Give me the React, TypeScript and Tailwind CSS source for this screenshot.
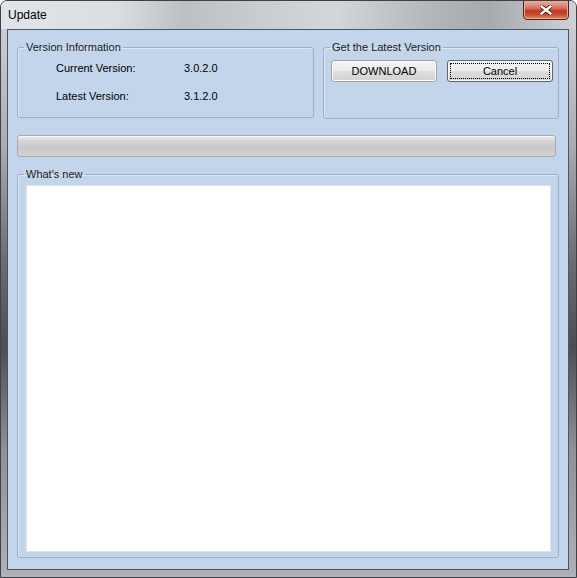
import React from 'react'

const FONT = 'font-["Liberation_Sans",Arial,sans-serif]'

function cn(...parts: (string | false | undefined)[]) {
  return parts.filter(Boolean).join(' ')
}

// Win7-style group box: legend sits on the top border
function GroupBox({
  title,
  className,
  children,
}: {
  title: string
  className?: string
  children: React.ReactNode
}) {
  return (
    <fieldset className={cn('border border-[#9eb0c8] rounded-[3px] shadow-[inset_1px_1px_0_#dbe6f3]', className)}>
      <legend className="ml-[6px] px-[2px] text-[11px] leading-[13px] text-[#1a1a1a]">{title}</legend>
      {children}
    </fieldset>
  )
}

function Button({ label, focused }: { label: string; focused?: boolean }) {
  return (
    <button
      className={cn(
        'relative w-[106px] h-[22px] rounded-[3px] border text-[11px] leading-none text-black',
        'bg-[linear-gradient(to_bottom,#f3f3f3_0%,#ececec_48%,#dedede_52%,#d2d2d2_100%)] shadow-[inset_0_0_0_1px_#fafafa]',
        focused ? 'border-[#5c6670]' : 'border-[#a3a3a3]'
      )}
    >
      {focused && <span className="absolute inset-[2px] border border-dotted border-black" />}
      {label}
    </button>
  )
}

export default function App() {
  return (
    <div className={`${FONT} w-[577px] h-[578px] flex flex-col overflow-hidden rounded-t-[7px] border border-[#3d4045] bg-[linear-gradient(to_bottom,#d2d6da_0%,#a9adb2_25%,#6a6d71_45%,#4c4e52_60%,#8e9196_78%,#aeb2b8_100%)]`}>
      {/* Title bar */}
      <div className="h-[28px] shrink-0 flex items-start bg-[linear-gradient(to_right,#e1e5e9_0%,#dadee2_20%,#bcc0c4_32%,#c9ccd0_45%,#d4d7da_58%,#b2b5b9_75%,#a6a9ad_85%,#cfd2d6_100%)]">
        <span className="pl-[7px] pt-[6px] text-[12px] leading-[16px] text-black">Update</span>
        <div className="ml-auto mr-[7px] -mt-[1px] w-[46px] h-[20px] rounded-b-[4px] border border-[#5a2018] shadow-[inset_0_0_0_1px_#eaa89c] bg-[linear-gradient(to_bottom,#e9b0a4_0%,#d6705e_40%,#c0381f_55%,#c74a2e_75%,#e08c6c_100%)] flex items-center justify-center">
          <svg width="12" height="10" viewBox="0 0 12 10">
            <path d="M1 1 L11 9 M11 1 L1 9" stroke="#4a1a12" strokeWidth="4" strokeLinecap="square" />
            <path d="M1.5 1.5 L10.5 8.5 M10.5 1.5 L1.5 8.5" stroke="#ffffff" strokeWidth="2.4" strokeLinecap="square" />
          </svg>
        </div>
      </div>

      {/* Client area */}
      <div className="flex-1 ml-[6px] mr-[7px] mb-[7px] border border-[#4c5664] bg-[#c3d5ea] flex flex-col pt-[11px] pl-[9px] pr-[9px] text-[11px] text-black">
        <div className="flex gap-[9px]">
          <GroupBox title="Version Information" className="w-[297px] h-[77px]">
            <div className="grid grid-cols-[128px_auto] gap-y-[14px] leading-[14px] pl-[38px] pt-[7px]">
              <span>Current Version:</span>
              <span>3.0.2.0</span>
              <span>Latest Version:</span>
              <span>3.1.2.0</span>
            </div>
          </GroupBox>
          <GroupBox title="Get the Latest Version" className="w-[236px] h-[78px]">
            <div className="flex gap-[10px] pl-[7px] pt-[6px]">
              <Button label="DOWNLOAD" />
              <Button label="Cancel" focused />
            </div>
          </GroupBox>
        </div>

        {/* Progress bar */}
        <div className="mt-[16px] w-[539px] h-[22px] rounded-[3px] border border-[#a9a9a9] bg-[linear-gradient(to_bottom,#ededed_0%,#d4d4d4_25%,#c8c8c8_60%,#d3d3d3_100%)] shadow-[inset_0_1px_0_#f7f7f7]" />

        <GroupBox title="What's new" className="mt-[11px]">
          <div className="pl-[8px] pr-[7px] pt-[4px] pb-[5px]">
            <div className="h-[367px] bg-white border border-[#d9e4f1]" />
          </div>
        </GroupBox>
      </div>
    </div>
  )
}
